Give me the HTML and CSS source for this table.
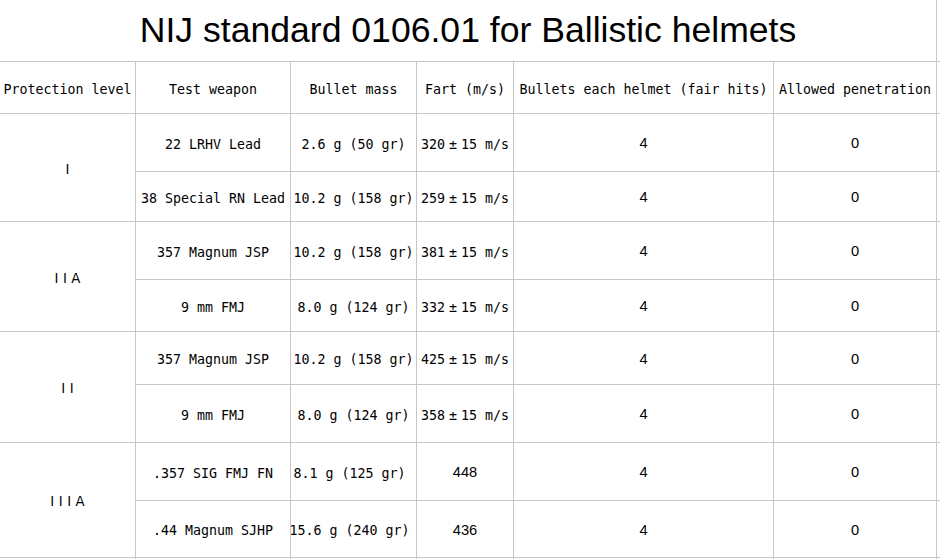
FILE: index.html
```html
<!DOCTYPE html>
<html>
<head>
<meta charset="utf-8">
<link rel="stylesheet" href="styles.css">
</head>
<body>
<div class="sheet">
  <div class="cell title">NIJ standard 0106.01 for Ballistic helmets</div>
  <div class="cell"></div>

  <div class="cell">Protection level</div>
  <div class="cell">Test weapon</div>
  <div class="cell">Bullet mass</div>
  <div class="cell">Fart (m/s)</div>
  <div class="cell">Bullets each helmet (fair hits)</div>
  <div class="cell">Allowed penetration</div>
  <div class="cell"></div>

  <div class="cell level">I</div>
  <div class="cell">22 LRHV Lead</div>
  <div class="cell">2.6 g (50 gr)</div>
  <div class="cell">320<span class="wide">±</span>15 m/s</div>
  <div class="cell num">4</div>
  <div class="cell num">0</div>
  <div class="cell"></div>

  <div class="cell">38 Special RN Lead</div>
  <div class="cell">10.2 g (158 gr)</div>
  <div class="cell">259<span class="wide">±</span>15 m/s</div>
  <div class="cell num">4</div>
  <div class="cell num">0</div>
  <div class="cell"></div>

  <div class="cell level">IIA</div>
  <div class="cell">357 Magnum JSP</div>
  <div class="cell">10.2 g (158 gr)</div>
  <div class="cell">381<span class="wide">±</span>15 m/s</div>
  <div class="cell num">4</div>
  <div class="cell num">0</div>
  <div class="cell"></div>

  <div class="cell">9 mm FMJ</div>
  <div class="cell">8.0 g (124 gr)</div>
  <div class="cell">332<span class="wide">±</span>15 m/s</div>
  <div class="cell num">4</div>
  <div class="cell num">0</div>
  <div class="cell"></div>

  <div class="cell level">II</div>
  <div class="cell">357 Magnum JSP</div>
  <div class="cell">10.2 g (158 gr)</div>
  <div class="cell">425<span class="wide">±</span>15 m/s</div>
  <div class="cell num">4</div>
  <div class="cell num">0</div>
  <div class="cell"></div>

  <div class="cell">9 mm FMJ</div>
  <div class="cell">8.0 g (124 gr)</div>
  <div class="cell">358<span class="wide">±</span>15 m/s</div>
  <div class="cell num">4</div>
  <div class="cell num">0</div>
  <div class="cell"></div>

  <div class="cell level">IIIA</div>
  <div class="cell">.357 SIG FMJ FN</div>
  <div class="cell">8.1 g (125 gr)&nbsp;</div>
  <div class="cell num">448</div>
  <div class="cell num">4</div>
  <div class="cell num">0</div>
  <div class="cell"></div>

  <div class="cell">.44 Magnum SJHP</div>
  <div class="cell">15.6 g (240 gr)&nbsp;</div>
  <div class="cell num">436</div>
  <div class="cell num">4</div>
  <div class="cell num">0</div>
  <div class="cell"></div>

  <div class="cell"></div>
  <div class="cell"></div>
  <div class="cell"></div>
  <div class="cell"></div>
  <div class="cell"></div>
  <div class="cell"></div>
  <div class="cell"></div>
</div>
</body>
</html>
```

FILE: styles.css
```css
html, body {
  margin: 0;
  padding: 0;
  overflow: hidden;
  background: #ffffff;
}

.sheet {
  display: grid;
  grid-template-columns: 135px 154px 125px 96px 259px 162px 3px;
  grid-template-rows: 61px 51px 57px 49px 57px 51px 52px 57px 57px 56px 1px;
  gap: 1px;
  background: #c6c6c6;
  width: 940px;
  font-family: "DejaVu Sans Mono", "Liberation Mono", monospace;
  font-size: 13.3px;
  color: #000;
}

.cell {
  background: #ffffff;
  display: flex;
  align-items: center;
  justify-content: center;
  text-align: center;
  white-space: nowrap;
  min-width: 0;
  padding-top: 3px;
}

.title {
  grid-column: 1 / 7;
  font-family: "Liberation Sans", Arial, sans-serif;
  font-size: 35.6px;
  padding-top: 0;
}

.level {
  grid-column: 1;
  grid-row: span 2;
  font-family: "DejaVu Sans", sans-serif;
  letter-spacing: 4.5px;
  text-indent: 4.5px;
}

.num {
  font-family: "Liberation Sans", Arial, sans-serif;
  font-size: 14.67px;
  padding-top: 1px;
}

.wide {
  display: inline-block;
  width: 16px;
  text-align: center;
}
```
